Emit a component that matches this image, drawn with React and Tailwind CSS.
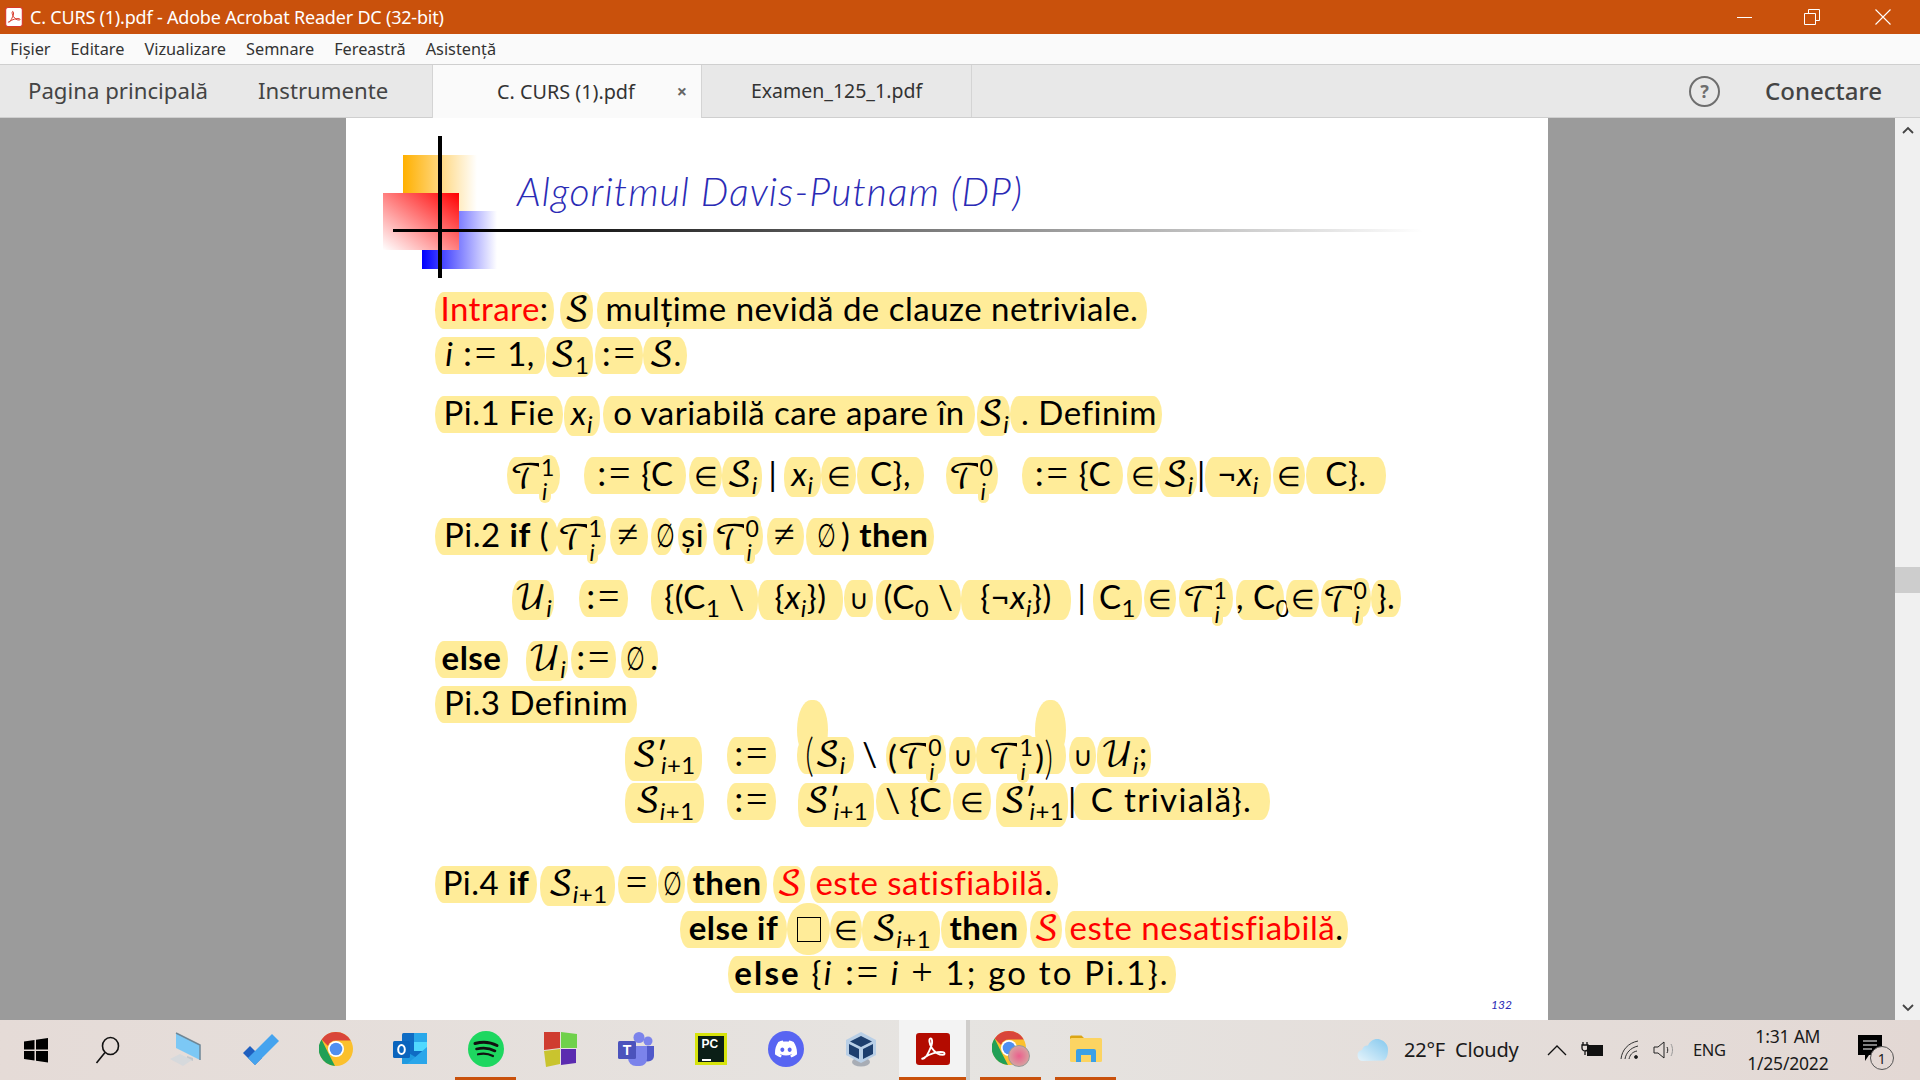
import { SiDiscord } from "react-icons/si";

const H = ({ className = "", children }) => (
  <div className={`relative h-[37px] shrink-0 rounded-[9px/18px] bg-[#ffec99] text-center leading-[32px] whitespace-nowrap ${className}`}>
    {children}
  </div>
);

const Sc = ({ children, className = "" }) => (
  <span className={`font-['DejaVu_Math_TeX_Gyre','DejaVu_Sans','Liberation_Serif',serif] font-normal tracking-normal ${className}`}>{children}</span>
);

const I = ({ children }) => <span className="italic">{children}</span>;

const Sub = ({ children }) => (
  <span className="relative top-[8px] text-[24px] leading-none">{children}</span>
);

const Stack = ({ sup }) => (
  <span className="relative -top-[2px] -ml-[5px] inline-flex flex-col text-left align-middle text-[23px] leading-[24px]">
    <span className="w-fit self-end rounded-[8px] bg-[#ffec99] px-[2px]">{sup}</span>
    <span className="w-fit rounded-[8px] bg-[#ffec99] px-[3px] italic">i</span>
  </span>
);

const Prime = () => <span className="-mr-[7px]">′</span>;

const Op = ({ children }) => (
  <span className="font-['Liberation_Serif',serif] text-[38px] font-normal tracking-[2px]">{children}</span>
);

// set membership and union sit lighter and smaller than the text
const Sym = ({ children }) => (
  <span className="font-['DejaVu_Sans',sans-serif] text-[27px] font-extralight tracking-normal">{children}</span>
);

const Big = ({ children }) => (
  <span className="inline-block scale-y-[1.4] font-light">{children}</span>
);

const Empty = () => <span className="inline-block scale-x-[0.65] font-normal">∅</span>;

const Bar = ({ className = "", children }) => (
  <div className={`relative z-10 text-center leading-[32px] ${className}`}>{children}</div>
);

const Line = ({ className = "", children }) => (
  <div className={`flex h-[37px] items-start ${className}`}>{children}</div>
);

const Logo = () => (
  <svg width="115" height="142" viewBox="0 0 115 142" className="shrink-0">
    <defs>
      <linearGradient id="ylw" x1="0" x2="1" y1="0" y2="0">
        <stop offset="0" stopColor="#ffb000" />
        <stop offset="1" stopColor="#ffffff" />
      </linearGradient>
      <linearGradient id="red" x1="1" x2="0" y1="0" y2="1">
        <stop offset="0" stopColor="#ff0000" />
        <stop offset="1" stopColor="#ffffff" />
      </linearGradient>
      <linearGradient id="blu" x1="0" x2="1" y1="0" y2="0">
        <stop offset="0" stopColor="#0000ff" />
        <stop offset="1" stopColor="#ffffff" />
      </linearGradient>
    </defs>
    <rect x="20" y="19" width="74" height="60" fill="url(#ylw)" />
    <rect x="39" y="75" width="75" height="58" fill="url(#blu)" />
    <rect x="0" y="57" width="76" height="57" fill="url(#red)" />
    <rect x="55" y="0" width="4" height="142" fill="#000" />
  </svg>
);

const WinLogo = () => (
  <svg width="26" height="26" viewBox="0 0 26 26">
    <path d="M1 4.500 11.500 3v9.500H1zM13 2.700 25 1v11.500H13zM1 14h10.500v9.500L1 22zM13 14h12v11.500l-12-1.800z" fill="#000" />
  </svg>
);

const SearchIcon = () => (
  <svg width="26" height="28" viewBox="0 0 26 28" fill="none" stroke="#111" strokeWidth="1.600">
    <ellipse cx="15.500" cy="10" rx="8" ry="8.500" />
    <path d="M10 16.500 1.500 27" />
  </svg>
);

const ComputerIcon = () => (
  <svg width="34" height="34" viewBox="0 0 34 34">
    <path d="M7 1 31 13v15L7 16z" fill="#7cc8f5" />
    <path d="M7 1 31 13v15" fill="none" stroke="#6f8796" strokeWidth="1.500" />
    <path d="M18 24l6 2v3l-6-2z" fill="#c4c8cc" />
    <path d="M1 27 11 22l12 6-9 6z" fill="#d6d9dc" />
  </svg>
);

const TickIcon = () => (
  <svg width="38" height="32" viewBox="0 0 38 32">
    <path d="M13 32 1 20l7-7 12 12z" fill="#1f5fbf" />
    <path d="M13 32 6 25 30 1l7 7z" fill="#45a3ee" />
  </svg>
);

const ChromeIcon = () => (
  <svg width="34" height="34" viewBox="0 0 34 34">
    <circle cx="17" cy="17" r="17" fill="#fbc02d" />
    <path d="M17 0a17 17 0 0 1 14.700 8.500H17a8.500 8.500 0 0 0-8 5.500L2.600 7.500A17 17 0 0 1 17 0z" fill="#d9453a" />
    <path d="M2.600 7.500 9.500 21.500l6.500 12.400A17 17 0 0 1 2.600 7.500z" fill="#21a056" />
    <circle cx="17" cy="17" r="8" fill="#fff" />
    <circle cx="17" cy="17" r="6.300" fill="#4f8ff0" />
  </svg>
);

const OutlookIcon = () => (
  <svg width="36" height="34" viewBox="0 0 36 34">
    <rect x="9" y="1" width="25" height="31" rx="1.500" fill="#0f6cc4" />
    <rect x="21" y="1" width="13" height="9" fill="#29a8ea" />
    <rect x="21" y="10" width="13" height="9" fill="#50d9ff" />
    <path d="M9 17 34 32H10a1 1 0 0 1-1-1z" fill="#1f9ae0" />
    <path d="M34 15v17H14z" fill="#2aa6ea" />
    <rect x="0" y="9" width="17" height="17" rx="1.500" fill="#0a64bd" />
    <ellipse cx="8.500" cy="17.500" rx="3.300" ry="4.500" fill="none" stroke="#fff" strokeWidth="2" />
  </svg>
);

const SpotifyIcon = () => (
  <svg width="36" height="36" viewBox="0 0 36 36" fill="none">
    <circle cx="18" cy="18" r="18" fill="#1ed760" />
    <path d="M7 12.500c7-2 15.500-1.500 22 2" stroke="#111" strokeWidth="3" strokeLinecap="round" />
    <path d="M8.500 18c6-1.500 13-1 18.500 2" stroke="#111" strokeWidth="2.600" strokeLinecap="round" />
    <path d="M10 23.300c5-1.200 10.500-.7 15 1.700" stroke="#111" strokeWidth="2.200" strokeLinecap="round" />
  </svg>
);

const TilesIcon = () => (
  <svg width="36" height="36" viewBox="0 0 36 36">
    <path d="M1 1h16v16L1 19z" fill="#cf3d30" />
    <path d="M18 1l16 2v14H18z" fill="#6fd14b" />
    <path d="M1 20l16-2v15L3 36z" fill="#c9c42e" />
    <path d="M18 18h15v14l-15 2z" fill="#5b2bb0" />
  </svg>
);

const TeamsIcon = () => (
  <svg width="36" height="34" viewBox="0 0 36 34">
    <circle cx="30" cy="9" r="4.500" fill="#7b83eb" />
    <circle cx="21" cy="5.500" r="5.500" fill="#7b83eb" />
    <path d="M26 14h10v10a6 6 0 0 1-10 4z" fill="#5059c9" />
    <path d="M10 14h19v13a7 7 0 0 1-7 7h-4a8 8 0 0 1-8-8z" fill="#7b83eb" />
    <rect x="0" y="9" width="18" height="18" rx="1.500" fill="#4b53bc" />
    <text x="9" y="23" textAnchor="middle" fontSize="14" fontWeight="700" fill="#fff" fontFamily="Liberation Sans, sans-serif">T</text>
  </svg>
);

const PyCharmIcon = () => (
  <div className="flex h-[32px] w-[32px] flex-col border-[3px] border-[#d6e30d] bg-[#0b1f17] px-[4px] pt-[2px] font-['Liberation_Sans',sans-serif] text-[12px] leading-[13px] font-bold text-white">
    <span>PC</span>
    <span className="mt-[8px] h-[2px] w-[9px] bg-white" />
  </div>
);

const DiscordIcon = () => (
  <div className="flex h-[36px] w-[36px] items-center justify-center rounded-full bg-[#5865f2]">
    <SiDiscord className="h-[22px] w-[22px] text-white" />
  </div>
);

const VBoxIcon = () => (
  <svg width="32" height="36" viewBox="0 0 32 36">
    <ellipse cx="16" cy="31" rx="9" ry="4.500" fill="#a8adb5" />
    <path d="M16 1 31 9v15l-15 8L1 24V9z" fill="#b9cfe6" />
    <path d="M16 5 27 10.500 16 16 5 10.500z" fill="#1e3f6e" />
    <path d="M4 13l10 5v10L4 23z" fill="#1e3f6e" />
    <path d="M28 13l-10 5v10l10-5z" fill="#1e3f6e" />
  </svg>
);

const AcrobatPath = ({ fill }) => (
  <path
    d="M6 24c2.500 1 5.500-4.500 8.500-12 1.200-3 .8-7-.8-7-1.800 0-1.400 5 1.200 9 3 4.500 6 6.500 10.500 6.500 2 0 2-2.200 0-2.500-5-.8-12.500 1.500-17.500 5-1.500 1-2.500 1.500-1.900 1z"
    fill="none"
    stroke={fill}
    strokeWidth="1.800"
  />
);

const AcrobatIcon = () => (
  <svg width="34" height="32" viewBox="0 0 32 30">
    <rect width="32" height="30" rx="3" fill="#b30b00" />
    <AcrobatPath fill="#fff" />
  </svg>
);

const ChromeProfileIcon = () => (
  <div className="relative h-[36px] w-[38px]">
    <ChromeIcon />
    <div className="absolute right-0 bottom-0 h-[22px] w-[22px] rounded-full border border-[#999] bg-[radial-gradient(circle,#ec5f8d,#d8a0a0_70%,#666)]" />
  </div>
);

const FolderIcon = () => (
  <svg width="32" height="28" viewBox="0 0 32 28">
    <path d="M0 2a1.500 1.500 0 0 1 1.500-1.500h10L15 4h-15z" fill="#dba514" />
    <rect x="0" y="3" width="32" height="24" rx="1.500" fill="#fcd462" />
    <path d="M6 27V16a2 2 0 0 1 2-2h16a2 2 0 0 1 2 2v11h-5v-7H11v7z" fill="#3ba0e6" />
  </svg>
);

const CloudIcon = () => (
  <svg width="32" height="24" viewBox="0 0 32 24">
    <defs>
      <linearGradient id="cld" x1="0" x2="1" y1="1" y2="0">
        <stop offset="0" stopColor="#e6f4fb" />
        <stop offset="1" stopColor="#84c8ee" />
      </linearGradient>
    </defs>
    <path d="M6 23a5.500 5.500 0 0 1-1-10.900C6 8 9 7 11 7.500 13 2.500 18 0 23 1.500c5 1.500 8 5.500 8 10 0 5-1 9-4 11z" fill="url(#cld)" />
  </svg>
);

const TaskItem = ({ className = "", children }) => (
  <div className={`flex h-full w-[61px] shrink-0 items-center justify-center border-b-[3px] ${className}`}>
    {children}
  </div>
);

export default function App() {
  return (
    <div className="flex h-[1080px] w-[1920px] flex-col overflow-hidden bg-[#9b9b9b] font-['Noto_Sans',sans-serif]">
      {/* title bar */}
      <div className="flex h-[34px] shrink-0 items-center bg-[#c9510c] text-white">
        <svg width="18" height="20" viewBox="0 0 32 36" className="ml-[5px]">
          <rect x="1" y="1" width="30" height="34" rx="4" fill="#fff" stroke="#d8392b" strokeWidth="2" />
          <g transform="translate(0 3)">
            <AcrobatPath fill="#d8392b" />
          </g>
        </svg>
        <span className="ml-[7px] text-[18px] tracking-[-0.2px]">C. CURS (1).pdf - Adobe Acrobat Reader DC (32-bit)</span>
        <div className="ml-auto flex h-full">
          <div className="flex w-[68px] items-center justify-center">
            <div className="h-[1px] w-[15px] bg-white" />
          </div>
          <div className="flex w-[68px] items-center justify-center">
            <svg width="16" height="16" viewBox="0 0 16 16" fill="none" stroke="#fff">
              <path d="M.5 4.500h11v11H.5zM4.500 4.500V.5h11v11h-4" />
            </svg>
          </div>
          <div className="flex w-[74px] items-center justify-center">
            <svg width="16" height="16" viewBox="0 0 16 16" stroke="#fff" strokeWidth="1.100">
              <path d="M.5.5l15 15M15.500.5l-15 15" />
            </svg>
          </div>
        </div>
      </div>

      {/* menu bar */}
      <div className="flex h-[30px] shrink-0 items-center gap-[20px] bg-[#fafafa] pl-[10px] text-[16.300px] text-[#333]">
        <span>Fișier</span>
        <span>Editare</span>
        <span>Vizualizare</span>
        <span>Semnare</span>
        <span>Fereastră</span>
        <span>Asistență</span>
      </div>

      {/* tabs */}
      <div className="flex h-[54px] shrink-0 items-stretch border-y-[1px] border-[#cfcfcf] bg-[#e8e8e8] text-[#444]">
        <div className="flex w-[432px] items-center gap-[50px] pl-[28px] text-[22.200px]">
          <span>Pagina principală</span>
          <span>Instrumente</span>
        </div>
        <div className="-mb-[1px] flex w-[270px] items-center border-x border-[#d4d4d4] bg-[#fafafa] pl-[64px] text-[19.800px] text-[#333]">
          <span>C. CURS (1).pdf</span>
          <span className="ml-[42px] text-[18px] font-bold text-[#666]">×</span>
        </div>
        <div className="flex w-[270px] items-center justify-center border-r border-[#d4d4d4] text-[19.500px] text-[#333]">
          <span>Examen_125_1.pdf</span>
        </div>
        <div className="ml-auto flex items-center pr-[38px]">
          <div className="flex h-[31px] w-[31px] items-center justify-center rounded-full border-[2.500px] border-[#6e6e6e] text-[18px] font-bold text-[#6e6e6e]">?</div>
          <span className="ml-[45px] text-[24px] font-medium text-[#444]">Conectare</span>
        </div>
      </div>

      {/* document area */}
      <div className="flex min-h-0 flex-1">
        <div className="w-[346px] shrink-0 bg-[#9b9b9b]" />
        <div className="relative w-[1202px] shrink-0 overflow-hidden bg-white pl-[88px] font-['Lato','DejaVu_Sans',sans-serif] text-[33px] tracking-[0.5px] text-black">
          <div className="relative -ml-[88px] flex h-[174px] items-start pt-[18px] pl-[37px]">
            <Logo />
            <h1 className="mt-[32px] ml-[19px] font-['Lato',sans-serif] text-[39px] leading-[46px] font-light tracking-[1.050px] text-[#2b2bb5] italic">Algoritmul Davis-Putnam (DP)</h1>
            <div className="absolute top-[111px] left-[47px] h-[3px] w-[1030px] bg-gradient-to-r from-black via-[#777] to-white" />
          </div>

          <Line>
            <H className="ml-[1px] w-[119px]"><span className="text-[#ff0000]">Intrare</span>:</H>
            <H className="ml-[6px] w-[33px]"><Sc>𝒮</Sc></H>
            <H className="ml-[4px] w-[550px]">mulțime nevidă de clauze netriviale.</H>
          </Line>
          <Line className="mt-[8px]">
            <H className="ml-[1px] w-[110px]"><I>i</I> <Op>:=</Op> 1,</H>
            <H className="ml-[1px] h-[40px] w-[47px]"><Sc>𝒮</Sc><Sub>1</Sub></H>
            <H className="ml-[2px] w-[48px]"><Op>:=</Op></H>
            <H className="w-[44px]"><Sc>𝒮</Sc>.</H>
          </Line>
          <Line className="mt-[22px]">
            <H className="ml-[1px] w-[128px]">Pi.1 Fie</H>
            <H className="ml-[1px] h-[40px] w-[36px]"><I>x</I><Sub><I>i</I></Sub></H>
            <H className="ml-[3px] w-[372px]">o variabilă care apare în</H>
            <H className="ml-[2px] h-[40px] w-[33px]"><Sc>𝒮</Sc><Sub><I>i</I></Sub></H>
            <H className="w-[152px] pl-[6px]">. Definim</H>
          </Line>
          <Line className="mt-[24px]">
            <H className="ml-[73px] w-[53px]"><Sc>𝒯</Sc><Stack sup="1" /></H>
            <H className="ml-[24px] w-[102px]"><Op>:=</Op> {"{"}C</H>
            <H className="ml-[3px] w-[33px]"><Sym>∈</Sym></H>
            <H className="h-[40px] w-[40px]"><Sc>𝒮</Sc><Sub><I>i</I></Sub></H>
            <Bar className="w-[22px]">|</Bar>
            <H className="h-[40px] w-[37px]"><I>x</I><Sub><I>i</I></Sub></H>
            <H className="w-[35px]"><Sym>∈</Sym></H>
            <H className="ml-[1px] w-[67px]">C{"}"},</H>
            <H className="ml-[22px] w-[52px]"><Sc>𝒯</Sc><Stack sup="0" /></H>
            <H className="ml-[24px] w-[101px]"><Op>:=</Op> {"{"}C</H>
            <H className="ml-[4px] w-[32px]"><Sym>∈</Sym></H>
            <H className="h-[40px] w-[38px]"><Sc>𝒮</Sc><Sub><I>i</I></Sub></H>
            <Bar className="w-[8px]">|</Bar>
            <H className="h-[40px] w-[66px]">¬<I>x</I><Sub><I>i</I></Sub></H>
            <H className="ml-[2px] w-[32px]"><Sym>∈</Sym></H>
            <H className="ml-[1px] w-[80px]">C{"}"}.</H>
          </Line>
          <Line className="mt-[24px]">
            <H className="ml-[1px] w-[123px]">Pi.2 <b>if</b> (</H>
            <H className="-ml-[2px] w-[50px]"><Sc>𝒯</Sc><Stack sup="1" /></H>
            <H className="ml-[4px] w-[38px]"><Op>≠</Op></H>
            <H className="ml-[3px] w-[22px]"><Empty /></H>
            <H className="ml-[5px] w-[29px]">și</H>
            <H className="ml-[6px] w-[50px]"><Sc>𝒯</Sc><Stack sup="0" /></H>
            <H className="ml-[4px] w-[37px]"><Op>≠</Op></H>
            <H className="ml-[2px] w-[128px]"><Empty />) <b>then</b></H>
          </Line>
          <Line className="mt-[25px]">
            <H className="ml-[78px] h-[40px] w-[42px]"><Sc>𝒰</Sc><Sub><I>i</I></Sub></H>
            <H className="ml-[25px] w-[49px]"><Op>:=</Op></H>
            <H className="ml-[23px] h-[40px] w-[107px]">{"{"}(C<Sub>1</Sub> \</H>
            <H className="h-[40px] w-[85px]">{"{"}<I>x</I><Sub><I>i</I></Sub>{"}"})</H>
            <H className="ml-[1px] w-[29px]"><Sym>∪</Sym></H>
            <H className="ml-[3px] h-[40px] w-[85px]">(C<Sub>0</Sub> \</H>
            <H className="h-[40px] w-[110px]">{"{"}¬<I>x</I><Sub><I>i</I></Sub>{"}"})</H>
            <Bar className="w-[22px]">|</Bar>
            <H className="h-[40px] w-[49px]">C<Sub>1</Sub></H>
            <H className="ml-[2px] w-[32px]"><Sym>∈</Sym></H>
            <H className="ml-[3px] w-[54px]"><Sc>𝒯</Sc><Stack sup="1" /></H>
            <H className="ml-[3px] h-[40px] w-[48px]">, C<Sub>0</Sub></H>
            <H className="ml-[2px] w-[33px]"><Sym>∈</Sym></H>
            <H className="ml-[2px] w-[50px]"><Sc>𝒯</Sc><Stack sup="0" /></H>
            <H className="w-[30px]">{"}"}.</H>
          </Line>
          <Line className="mt-[24px]">
            <H className="ml-[1px] w-[73px]"><b>else</b></H>
            <H className="ml-[18px] h-[40px] w-[42px]"><Sc>𝒰</Sc><Sub><I>i</I></Sub></H>
            <H className="ml-[3px] w-[45px]"><Op>:=</Op></H>
            <H className="ml-[5px] w-[37px]"><Empty />.</H>
          </Line>
          <Line className="mt-[8px]">
            <H className="ml-[1px] w-[202px]">Pi.3 Definim</H>
          </Line>
          <Line className="mt-[14px]">
            <H className="ml-[191px] h-[44px] w-[77px]"><Sc>𝒮</Sc><Prime /><Sub><I>i</I>+1</Sub></H>
            <H className="ml-[25px] w-[49px]"><Op>:=</Op></H>
            <H className="ml-[21px] w-[57px]">
              <div className="absolute -top-[37px] left-0 h-[60px] w-[31px] rounded-[14px/30px] bg-[#ffec99]" />
              <span className="relative"><Big>(</Big><Sc>𝒮</Sc><Sub><I>i</I></Sub></span>
            </H>
            <Bar className="w-[32px]">\</Bar>
            <H className="w-[60px]">(<Sc>𝒯</Sc><Stack sup="0" /></H>
            <H className="ml-[3px] w-[27px]"><Sym>∪</Sym></H>
            <H className="w-[90px]">
              <div className="absolute -top-[37px] right-0 h-[60px] w-[31px] rounded-[14px/30px] bg-[#ffec99]" />
              <span className="relative"><Sc>𝒯</Sc><Stack sup="1" />)<Big>)</Big></span>
            </H>
            <H className="ml-[3px] w-[27px]"><Sym>∪</Sym></H>
            <H className="ml-[1px] h-[40px] w-[54px]"><Sc>𝒰</Sc><Sub><I>i</I></Sub>;</H>
          </Line>
          <Line className="mt-[9px]">
            <H className="ml-[191px] h-[40px] w-[79px]"><Sc>𝒮</Sc><Sub><I>i</I>+1</Sub></H>
            <H className="ml-[23px] w-[49px]"><Op>:=</Op></H>
            <H className="ml-[22px] h-[44px] w-[76px]"><Sc>𝒮</Sc><Prime /><Sub><I>i</I>+1</Sub></H>
            <H className="ml-[2px] w-[75px]">\ {"{"}C</H>
            <H className="ml-[2px] w-[38px]"><Sym>∈</Sym></H>
            <H className="ml-[5px] h-[44px] w-[72px]"><Sc>𝒮</Sc><Prime /><Sub><I>i</I>+1</Sub></H>
            <Bar className="w-[3px]">|</Bar>
            <H className="ml-[2px] w-[197px] tracking-[1.4px]">C trivială{"}"}.</H>
          </Line>
          <Line className="mt-[46px]">
            <H className="ml-[1px] w-[102px]">Pi.4 <b>if</b></H>
            <H className="ml-[3px] h-[40px] w-[75px]"><Sc>𝒮</Sc><Sub><I>i</I>+1</Sub></H>
            <H className="ml-[3px] w-[39px]"><Op>=</Op></H>
            <H className="ml-[1px] w-[27px]"><Empty /></H>
            <H className="ml-[2px] w-[80px]"><b>then</b></H>
            <H className="ml-[6px] w-[32px]"><Sc className="text-[#ff0000]">𝒮</Sc></H>
            <H className="ml-[5px] w-[248px]"><span className="text-[#ff0000]">este satisfiabilă</span>.</H>
          </Line>
          <Line className="mt-[8px]">
            <H className="ml-[246px] w-[107px]"><b>else if</b></H>
            <H className="-mt-[8px] flex h-[52px] w-[43px] items-center justify-center rounded-[20px/26px]">
              <span className="h-[25px] w-[24px] border border-black" />
            </H>
            <H className="w-[32px]"><Sym>∈</Sym></H>
            <H className="h-[40px] w-[78px]"><Sc>𝒮</Sc><Sub><I>i</I>+1</Sub></H>
            <H className="ml-[1px] w-[86px]"><b>then</b></H>
            <H className="ml-[3px] w-[32px]"><Sc className="text-[#ff0000]">𝒮</Sc></H>
            <H className="ml-[3px] w-[283px]"><span className="text-[#ff0000]">este nesatisfiabilă</span>.</H>
          </Line>
          <Line className="mt-[8px]">
            <H className="ml-[294px] w-[448px] tracking-[2.200px]"><b>else</b> {"{"}<I>i</I> <Op>:=</Op> <I>i</I> <Op>+</Op> 1; go to Pi.1{"}"}.</H>
          </Line>
          <div className="mt-[5px] pr-[36px] text-right text-[12px] leading-[14px] tracking-normal text-[#2b2bb5] italic">132</div>
        </div>
        <div className="w-[347px] shrink-0 bg-[#9b9b9b]" />
        <div className="flex flex-1 flex-col items-center justify-between bg-[#f0f0f0] py-[8px]">
          <svg width="12" height="8" viewBox="0 0 12 8" fill="none" stroke="#444" strokeWidth="1.800">
            <path d="M1 7l5-5 5 5" />
          </svg>
          <div className="absolute top-[567px] h-[26px] w-[25px] bg-[#cdcdcd]" />
          <svg width="12" height="8" viewBox="0 0 12 8" fill="none" stroke="#444" strokeWidth="1.800">
            <path d="M1 1l5 5 5-5" />
          </svg>
        </div>
      </div>

      {/* taskbar */}
      <div className="flex h-[60px] shrink-0 items-center bg-gradient-to-r from-[#e5dbd7] via-[#e6e4e1] to-[#e3d8d4] text-[#1a1a1a]">
        <div className="flex h-full w-[72px] shrink-0 items-center justify-center"><WinLogo /></div>
        <div className="flex h-full w-[72px] shrink-0 items-center justify-center"><SearchIcon /></div>
        <div className="ml-[11px] flex h-full shrink-0 gap-[14px]">
          <TaskItem className="border-transparent"><ComputerIcon /></TaskItem>
          <TaskItem className="border-transparent"><TickIcon /></TaskItem>
          <TaskItem className="border-transparent"><ChromeIcon /></TaskItem>
          <TaskItem className="border-transparent"><OutlookIcon /></TaskItem>
          <TaskItem className="border-[#c9510c]"><SpotifyIcon /></TaskItem>
          <TaskItem className="border-transparent"><TilesIcon /></TaskItem>
          <TaskItem className="border-transparent"><TeamsIcon /></TaskItem>
          <TaskItem className="border-transparent"><PyCharmIcon /></TaskItem>
          <TaskItem className="border-transparent"><DiscordIcon /></TaskItem>
          <TaskItem className="border-transparent"><VBoxIcon /></TaskItem>
        </div>
        <TaskItem className="ml-[8px] w-[67px] border-[#c9510c] bg-[#f3f3f3]"><AcrobatIcon /></TaskItem>
        <div className="h-full w-[4px] shrink-0 bg-[#cfcdcb]" />
        <TaskItem className="ml-[10px] border-[#c9510c]"><ChromeProfileIcon /></TaskItem>
        <TaskItem className="ml-[14px] border-[#c9510c]"><FolderIcon /></TaskItem>

        <div className="ml-[241px] flex items-center">
          <CloudIcon />
          <span className="ml-[15px] w-[117px] text-[20px] tracking-[-0.2px] whitespace-nowrap">22°F&nbsp; Cloudy</span>
          <svg width="20" height="12" viewBox="0 0 20 12" fill="none" stroke="#111" strokeWidth="1.300" className="ml-[26px]">
            <path d="M1 11l9-9 9 9" />
          </svg>
          <svg width="24" height="18" viewBox="0 0 24 18" className="ml-[13px]">
            <path d="M3 1v3M7 1v3M2 4h6v3a3 3 0 0 1-6 0zM5 10v4" stroke="#111" strokeWidth="1.300" fill="none" />
            <rect x="7" y="4" width="16" height="11" fill="#111" />
          </svg>
          <svg width="20" height="20" viewBox="0 0 20 20" fill="none" stroke="#333" strokeWidth="1" className="ml-[16px]">
            <path d="M1 19C2 10 8 3 18 1M5 19c1-6 5-11 13-13M9 19c1-4 3-7 8-8" />
            <circle cx="16" cy="17" r="1.500" fill="#111" />
          </svg>
          <svg width="24" height="20" viewBox="0 0 24 20" fill="none" stroke="#222" strokeWidth="1" className="ml-[13px]">
            <path d="M1 7h4l6-5v16l-6-5H1z" />
            <path d="M14 7c1 2 1 4 0 6" />
            <path d="M18 4c2 4 2 8 0 12" stroke="#999" />
          </svg>
          <span className="ml-[16px] text-[16.500px] tracking-[-0.3px]">ENG</span>
          <div className="ml-[21px] flex w-[82px] flex-col items-center text-[17.500px] leading-[27px] tracking-[-0.2px] whitespace-nowrap">
            <span>1:31 AM</span>
            <span>1/25/2022</span>
          </div>
          <div className="relative ml-[29px] h-[30px] w-[24px]">
            <svg width="24" height="26" viewBox="0 0 24 26">
              <path d="M0 0h24v20H11l-4 6v-6H0z" fill="#000" />
              <path d="M5 6h14M5 10h14M5 14h9" stroke="#fff" strokeWidth="1.200" />
            </svg>
            <div className="absolute top-[11px] left-[12px] flex h-[24px] w-[24px] items-center justify-center rounded-full border border-[#555] bg-[#e3d8d4] text-[14px]">1</div>
          </div>
        </div>
      </div>
    </div>
  );
}
